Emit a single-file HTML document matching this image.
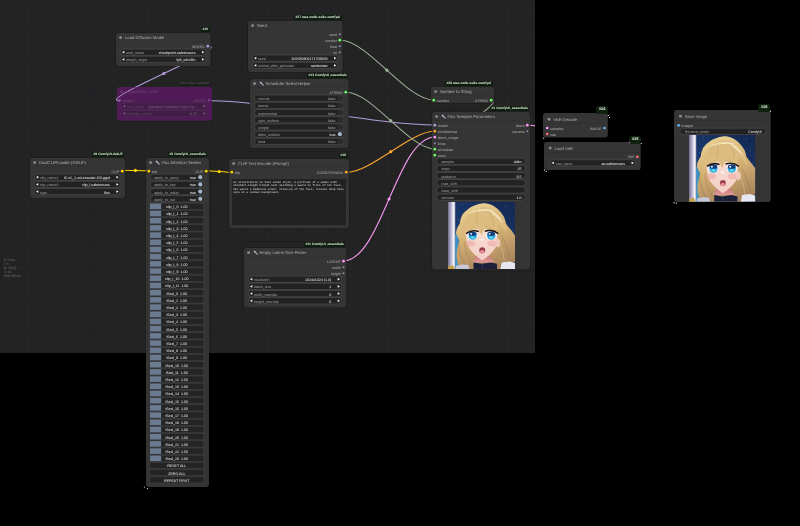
<!DOCTYPE html><html><head><meta charset="utf-8"><style>
*{margin:0;padding:0;box-sizing:border-box}
html,body{width:800px;height:526px;overflow:hidden;background:#000;font-family:"Liberation Sans",sans-serif;text-rendering:geometricPrecision}
#canvas{position:absolute;left:0;top:0;width:535px;height:353px;background-color:#242424;
background-image:
 linear-gradient(to right, rgba(0,0,0,0.08) 1px, transparent 1px),
 linear-gradient(to bottom, rgba(0,0,0,0.08) 1px, transparent 1px),
 linear-gradient(to right, rgba(0,0,0,0.04) 1px, transparent 1px),
 linear-gradient(to bottom, rgba(0,0,0,0.04) 1px, transparent 1px);
background-size:30px 30px,30px 30px,3px 3px,3px 3px;
background-position:1px 1px,1px 1px,1px 1px,1px 1px}
.axis{position:absolute;background:#1e242e}
svg.links{position:absolute;left:0;top:0;width:535px;height:353px;overflow:hidden}
.node{position:absolute;will-change:transform}
.ns{position:absolute;left:0;top:0;overflow:visible}
.wt{position:absolute;height:6px;line-height:8.0px;font-size:3.6px;white-space:nowrap}
.wl{color:#a0a0a0}
.wv{color:#f2f2f2}
.c{text-align:center}
.slabel{position:absolute;height:5px;line-height:6.2px;font-size:3.6px;color:#b0b0b0;white-space:nowrap}
.slabel.r{text-align:right}
.title{position:absolute;top:0;height:9px;line-height:9.2px;font-size:4.2px;color:#b0b0b0;white-space:nowrap}
.badge{position:absolute;padding:0 1.5px;background:#0c1f0c;color:#f0f0f0;font-size:3.35px;font-weight:bold;border-radius:1.8px;white-space:nowrap;will-change:transform}
.badge.tab{border-radius:2.2px;font-size:4px;background:#0e220e;z-index:2}
.badge.dim{background:rgba(20,20,20,0.25);color:#555}
.ta{position:absolute;background:#222;font-family:"Liberation Mono",monospace;font-size:2.75px;line-height:3.4px;color:#ddd;padding:0.8px 1.2px;word-break:normal}
.stats{position:absolute;left:4.2px;top:258.8px;font-size:3.15px;line-height:3.95px;color:#5c5c5c;white-space:nowrap;font-weight:bold;will-change:transform}
.img{position:absolute;overflow:hidden}
.tal{position:absolute;font-family:"Liberation Mono",monospace;font-size:2.75px;line-height:3.4px;color:#e0e0e0;white-space:nowrap}
</style></head><body><svg width="0" height="0" style="position:absolute"><defs>
<linearGradient id="bg" x1="0.8" y1="0" x2="0.1" y2="1"><stop offset="0" stop-color="#142a55"/><stop offset="0.55" stop-color="#1a3a70"/><stop offset="1" stop-color="#2f7fc0"/></linearGradient>
<linearGradient id="sw" x1="0" x2="1"><stop offset="0" stop-color="#6e6c88"/><stop offset="0.3" stop-color="#a6a4c0"/><stop offset="0.62" stop-color="#d8d8ea"/><stop offset="0.8" stop-color="#ffffff"/><stop offset="1" stop-color="#8a8aa0"/></linearGradient>
<linearGradient id="hr" x1="0.3" y1="0" x2="0.6" y2="1"><stop offset="0" stop-color="#ead094"/><stop offset="0.45" stop-color="#d6b476"/><stop offset="1" stop-color="#a8845c"/></linearGradient>
<linearGradient id="sk" x1="0" y1="0" x2="0" y2="1"><stop offset="0" stop-color="#f8dcd2"/><stop offset="1" stop-color="#f4cfc6"/></linearGradient>
<linearGradient id="nk" x1="0" y1="0" x2="0" y2="1"><stop offset="0" stop-color="#c87878"/><stop offset="1" stop-color="#e09a98"/></linearGradient>
<symbol id="girl" viewBox="0 0 100 100" preserveAspectRatio="none">
<rect width="100" height="100" fill="url(#bg)"/>
<path d="M10 48 L26 48 L28 96 L10 96Z" fill="#3a9fd6" opacity="0.85"/>
<g fill="#cfe0ff" opacity="0.75"><circle cx="86" cy="6" r="0.6"/><circle cx="92" cy="24" r="0.5"/><circle cx="22" cy="4" r="0.5"/><circle cx="95" cy="42" r="0.6"/><circle cx="90" cy="58" r="0.5"/><circle cx="16" cy="26" r="0.5"/><circle cx="74" cy="3" r="0.4"/></g>
<rect x="0" y="0" width="11" height="100" fill="url(#sw)"/>
<path d="M1 94 L4 97 L6 93 L9 97 L10 100 L0 100Z" fill="#c9a040"/>
<path d="M50.4 2.1 C38 4 28 10 21.7 18.8 C19 24 18 28 17.8 31.8 C15 36 12.5 41 11.9 45.5 C12 50 16 54 17 58 C14 66 12 76 13 84 C14 90 15 96 16 100 L84 100 C90 96 96 92 100 88 L100 50 C96 44 90 38 86.5 32.6 C85 26 84 22 81.5 19.4 C76 10 66 3 58 2.1 C55 1.8 52 1.8 50.4 2.1Z" fill="url(#hr)"/>
<path d="M41 80 L62 80 L69 90 L37 90Z" fill="url(#nk)"/>
<path d="M26 46 C27 56 29 64 31 68 C36 76 44 83 51 87.1 C58 83 66 76 71 68 C73 62 74 52 73.5 44 C62 38 38 38 26 46Z" fill="url(#sk)"/>
<path d="M20 48 C20 30 30 12 50 8 C70 6 84 20 88 46 C82 38 78 34 74 30 C75 38 72 44 68 46 C66 40 62 34 57 31 C55 39 52 45 50 50 C47 42 43 35 38 32 C36 39 31 44 26 47 Z" fill="#dcbc80"/>
<path d="M30 18 C40 10 58 8 70 14 C60 12 46 13 30 18Z" fill="#f6e8c0" opacity="0.8"/>
<path d="M56 10 C68 12 78 20 82 32 C74 24 66 17 56 10Z" fill="#f8ecc8" opacity="0.7"/>
<path d="M42 12 C44 20 44 26 42 32" stroke="#a07a48" stroke-width="0.6" fill="none" opacity="0.6"/>
<path d="M62 14 C66 22 68 28 68 36" stroke="#a07a48" stroke-width="0.6" fill="none" opacity="0.6"/>
<path d="M16 56 C15 72 20 86 28 98" stroke="#8a6848" stroke-width="1.2" fill="none" opacity="0.5"/>
<path d="M24 58 C25 72 30 86 38 96" stroke="#8a6848" stroke-width="0.9" fill="none" opacity="0.5"/>
<path d="M80 50 C86 62 92 76 92 92" stroke="#8a6848" stroke-width="1" fill="none" opacity="0.5"/>
<path d="M74 56 C80 66 84 80 84 94" stroke="#f0dca8" stroke-width="0.9" fill="none" opacity="0.6"/>
<ellipse cx="36.5" cy="49.5" rx="8.4" ry="7" fill="#f3eef6"/><ellipse cx="64.5" cy="49.5" rx="8.4" ry="7" fill="#f3eef6"/>
<ellipse cx="36.8" cy="50.2" rx="6.2" ry="6.2" fill="#23a3dc"/><ellipse cx="64.4" cy="50.2" rx="6.2" ry="6.2" fill="#23a3dc"/>
<ellipse cx="36.8" cy="47.4" rx="5.8" ry="3.2" fill="#123f7c"/><ellipse cx="64.4" cy="47.4" rx="5.8" ry="3.2" fill="#123f7c"/>
<ellipse cx="36.8" cy="53" rx="3.2" ry="2" fill="#6fe0f0" opacity="0.8"/><ellipse cx="64.4" cy="53" rx="3.2" ry="2" fill="#6fe0f0" opacity="0.8"/>
<circle cx="34.5" cy="47.5" r="1.4" fill="#fff"/><circle cx="62.1" cy="47.5" r="1.4" fill="#fff"/>
<path d="M27 47 Q35 40.5 46 44" stroke="#231712" stroke-width="2.4" fill="none"/><path d="M55 43.5 Q66 40 75 47" stroke="#231712" stroke-width="2.4" fill="none"/>
<ellipse cx="33" cy="62" rx="8" ry="4.5" fill="#ee9a9a" opacity="0.45"/><ellipse cx="66" cy="62" rx="7.5" ry="4.5" fill="#ee9a9a" opacity="0.45"/>
<ellipse cx="50.9" cy="56" rx="2.6" ry="1.4" fill="#fff6f2"/>
<ellipse cx="51" cy="71.9" rx="4.4" ry="4.6" fill="#9a3c4c"/><ellipse cx="51" cy="74" rx="3.2" ry="2.4" fill="#e88e98"/>
<path d="M72 54 C79 54 80 63 75 68 L71 66Z" fill="#f1c9bc"/>
<path d="M38 90 L50 92 L64 90 L73 92 L73 100 L38 100Z" fill="#1c2038"/>
<path d="M50.5 92 L51.5 92 L51.5 100 L50.5 100Z" fill="#3b4470"/>
<path d="M11 100 L12 95 L22 93 L30 94 L32 100Z" fill="#c8c8d8"/>
<path d="M80 90 L92 88.5 L100 91 L100 100 L78 100Z" fill="#e6e7f0"/>
</symbol></defs></svg>
<div id="canvas"></div>
<div class="axis" style="left:90.4px;top:90.4px;width:444.6px;height:0.6px"></div>
<div class="axis" style="left:90.4px;top:90.4px;width:0.6px;height:262.6px"></div>
<svg class="links" viewBox="0 0 535 353"><path d="M208 46.2 C233.95 46.2 93.75 100.8 119.7 100.8" fill="none" stroke="#b39ddb" stroke-width="1.05"/><circle cx="163.85" cy="73.5" r="1.6" fill="#b39ddb"/><path d="M211 100.8 C267.35 100.8 378.75 125 435.1 125" fill="none" stroke="#b39ddb" stroke-width="1.05"/><circle cx="323.05" cy="112.9" r="1.6" fill="#b39ddb"/><path d="M122.2 170.2 C128.8 170.2 142 170.7 148.6 170.7" fill="none" stroke="#ffd500" stroke-width="1.05"/><circle cx="135.4" cy="170.45" r="1.6" fill="#ffd500"/><path d="M206 170.7 C212.61 170.7 225.79 172.4 232.4 172.4" fill="none" stroke="#ffd500" stroke-width="1.05"/><circle cx="219.2" cy="171.55" r="1.6" fill="#ffd500"/><path d="M346.4 172.4 C370.87 172.4 410.63 131 435.1 131" fill="none" stroke="#ffa931" stroke-width="1.05"/><circle cx="390.75" cy="151.7" r="1.6" fill="#ffa931"/><path d="M343 261 C381.62 261 396.48 137 435.1 137" fill="none" stroke="#ff9cf9" stroke-width="1.05"/><circle cx="389.05" cy="199" r="1.6" fill="#ff9cf9"/><path d="M340.1 40.3 C367.83 40.3 405.87 100 433.6 100" fill="none" stroke="#9cb296" stroke-width="1.05"/><circle cx="386.85" cy="70.15" r="1.6" fill="#9cb296"/><path d="M346.2 92.2 C372.57 92.2 408.73 149 435.1 149" fill="none" stroke="#9cb296" stroke-width="1.05"/><circle cx="390.65" cy="120.6" r="1.6" fill="#9cb296"/><path d="M490.8 100 C510.37 100 415.53 155 435.1 155" fill="none" stroke="#9cb296" stroke-width="1.05"/><circle cx="462.95" cy="127.5" r="1.6" fill="#9cb296"/><path d="M527.6 125 C532.25 125 541.35 127.6 546 127.6" fill="none" stroke="#ff9cf9" stroke-width="1.05"/><circle cx="536.8" cy="126.3" r="1.6" fill="#ff9cf9"/></svg>
<div class="stats">T: 0.00s<br>I: 0<br>N: 10 [0]<br>V: 26<br>FPS:250.00</div>
<div class="badge" style="right:590.7px;top:27px;height:5px;line-height:5.3px">#10</div>
<div class="node" style="left:115.9px;top:33px;width:94.6px;height:33px">
<svg class="ns" width="94.6" height="33" viewBox="0 0 94.6 33"><rect x="-0.6" y="-0.6" width="95.8" height="34.2" rx="3" fill="#000" opacity="0.25"/><rect x="0" y="0" width="94.6" height="33" rx="2.4" fill="#353535"/><g><rect x="0.3" y="8.5" width="94" height="0.5" fill="#2e2e2e"/><circle cx="4.6" cy="4.6" r="1.45" fill="#8c8c8c"/><circle cx="91.8" cy="13.2" r="1.35" fill="#b39ddb"/><rect x="4.4" y="16.05" width="85.5" height="6.3" rx="3.15" fill="#222" stroke="#4c4c4c" stroke-width="0.7"/><path d="M8.3 17.8 L6 19.2 L8.3 20.6Z" fill="#f0f0f0"/><path d="M86 17.8 L88.3 19.2 L86 20.6Z" fill="#f0f0f0"/><rect x="4.4" y="23.25" width="85.5" height="6.3" rx="3.15" fill="#222" stroke="#4c4c4c" stroke-width="0.7"/><path d="M8.3 25 L6 26.4 L8.3 27.8Z" fill="#f0f0f0"/><path d="M86 25 L88.3 26.4 L86 27.8Z" fill="#f0f0f0"/></g></svg>
<div class="title" style="left:9px;top:0.1px">Load Diffusion Model</div><div class="slabel r" style="right:5.6px;top:10.7px">MODEL</div><div class="wt wl" style="left:10px;top:16.2px">unet_name</div><div class="wt wv" style="right:15.1px;top:16.2px">checkpoint.safetensors</div><div class="wt wl" style="left:10px;top:23.4px">weight_dtype</div><div class="wt wv" style="right:15.1px;top:23.4px">fp8_e4m3fn</div>

</div>
<div class="badge dim" style="right:589.3px;top:81.3px;height:5px;line-height:5.3px">#26 x-flux-comfyui</div>
<div class="node bypass" style="left:116.9px;top:87.3px;width:95px;height:33.7px">
<svg class="ns" width="95" height="33.7" viewBox="0 0 95 33.7"><rect x="0" y="0" width="95" height="33.7" rx="2.4" fill="#511b57"/><g opacity="0.3"><circle cx="4.6" cy="4.6" r="1.45" fill="#8c8c8c"/><circle cx="2.8" cy="13.2" r="1.35" fill="#b39ddb"/><circle cx="92.2" cy="13.2" r="1.35" fill="#b39ddb"/><rect x="4.4" y="16.05" width="85.9" height="6.3" rx="3.15" fill="#222" stroke="#4c4c4c" stroke-width="0.7"/><path d="M8.3 17.8 L6 19.2 L8.3 20.6Z" fill="#f0f0f0"/><path d="M86.4 17.8 L88.7 19.2 L86.4 20.6Z" fill="#f0f0f0"/><rect x="4.4" y="23.25" width="85.9" height="6.3" rx="3.15" fill="#222" stroke="#4c4c4c" stroke-width="0.7"/><path d="M8.3 25 L6 26.4 L8.3 27.8Z" fill="#f0f0f0"/><path d="M86.4 25 L88.7 26.4 L86.4 27.8Z" fill="#f0f0f0"/></g></svg>
<div style="opacity:0.3"><div class="title" style="left:11.2px;top:0.1px">Load Flux LoRA</div><div class="slabel" style="left:5.8px;top:10.7px">model</div><div class="slabel r" style="right:5.6px;top:10.7px">MODEL</div><div class="wt wl" style="left:10px;top:16.2px">lora_name</div><div class="wt wv" style="right:15.1px;top:16.2px">Sylvatica&#39;s Matthew Style-Sp...</div><div class="wt wl" style="left:10px;top:23.4px">strength_model</div><div class="wt wv" style="right:15.1px;top:23.4px">0.75</div></div>
</div>
<svg class="links" viewBox="0 0 535 353" style="z-index:1"><defs><clipPath id="lc"><rect x="116.9" y="87.6" width="95" height="33.4" rx="2.4"/></clipPath></defs><path d="M208 46.2 C233.95 46.2 93.75 100.8 119.7 100.8" fill="none" stroke="#b39ddb" stroke-width="0.95" clip-path="url(#lc)"/></svg>
<div class="badge" style="right:458.3px;top:15.1px;height:5px;line-height:5.3px">#27 was-node-suite-comfyui</div>
<div class="node" style="left:248.3px;top:21.1px;width:94.6px;height:51px">
<svg class="ns" width="94.6" height="51" viewBox="0 0 94.6 51"><rect x="-0.6" y="-0.6" width="95.8" height="52.2" rx="3" fill="#000" opacity="0.25"/><rect x="0" y="0" width="94.6" height="51" rx="2.4" fill="#353535"/><g><rect x="0.3" y="8.5" width="94" height="0.5" fill="#2e2e2e"/><circle cx="4.6" cy="4.6" r="1.45" fill="#8c8c8c"/><circle cx="91.8" cy="13.2" r="1.05" fill="#9a9ac8" opacity="0.8"/><circle cx="91.8" cy="19.2" r="1.35" fill="#6f6"/><circle cx="91.8" cy="25.2" r="1.05" fill="#9a9ac8" opacity="0.8"/><circle cx="91.8" cy="31.2" r="1.05" fill="#9a9ac8" opacity="0.8"/><rect x="4.4" y="34.05" width="85.5" height="6.3" rx="3.15" fill="#222" stroke="#4c4c4c" stroke-width="0.7"/><path d="M8.3 35.8 L6 37.2 L8.3 38.6Z" fill="#f0f0f0"/><path d="M86 35.8 L88.3 37.2 L86 38.6Z" fill="#f0f0f0"/><rect x="4.4" y="41.25" width="85.5" height="6.3" rx="3.15" fill="#222" stroke="#4c4c4c" stroke-width="0.7"/><path d="M8.3 43 L6 44.4 L8.3 45.8Z" fill="#f0f0f0"/><path d="M86 43 L88.3 44.4 L86 45.8Z" fill="#f0f0f0"/></g></svg>
<div class="title" style="left:9px;top:0.1px">Seed</div><div class="slabel r" style="right:5.6px;top:10.7px">seed</div><div class="slabel r" style="right:5.6px;top:16.7px">number</div><div class="slabel r" style="right:5.6px;top:22.7px">float</div><div class="slabel r" style="right:5.6px;top:28.7px">int</div><div class="wt wl" style="left:10px;top:34.2px">seed</div><div class="wt wv" style="right:15.1px;top:34.2px">302580806171709668</div><div class="wt wl" style="left:10px;top:41.4px">control_after_generate</div><div class="wt wv" style="right:15.1px;top:41.4px">randomize</div>

</div>
<div class="badge" style="right:452.2px;top:73px;height:5px;line-height:5.3px">#13 ComfyUI_essentials</div>
<div class="node" style="left:250.4px;top:79px;width:98.6px;height:69px">
<svg class="ns" width="98.6" height="69" viewBox="0 0 98.6 69"><rect x="-0.6" y="-0.6" width="99.8" height="70.2" rx="3" fill="#000" opacity="0.25"/><rect x="0" y="0" width="98.6" height="69" rx="2.4" fill="#353535"/><g><rect x="0.3" y="8.5" width="98" height="0.5" fill="#2e2e2e"/><circle cx="4.6" cy="4.6" r="1.45" fill="#8c8c8c"/><g transform="translate(9.4,2.3) scale(0.46)"><path d="M3.2 3.2 L8.4 8.4" stroke="#b8b2cc" stroke-width="2.4" stroke-linecap="round"/><path d="M0.2 2.6 L2.6 0.2 L5.2 2.6 L2.6 5.2Z" fill="#b8b2cc"/></g><circle cx="95.8" cy="13.2" r="1.35" fill="#6f6"/><rect x="4.4" y="16.05" width="89.5" height="6.3" rx="3.15" fill="#222" stroke="#4c4c4c" stroke-width="0.7"/><circle cx="89.9" cy="19.2" r="2.0" fill="#262626" stroke="#4a4a4a" stroke-width="0.45"/><rect x="4.4" y="23.25" width="89.5" height="6.3" rx="3.15" fill="#222" stroke="#4c4c4c" stroke-width="0.7"/><circle cx="89.9" cy="26.4" r="2.0" fill="#262626" stroke="#4a4a4a" stroke-width="0.45"/><rect x="4.4" y="30.45" width="89.5" height="6.3" rx="3.15" fill="#222" stroke="#4c4c4c" stroke-width="0.7"/><circle cx="89.9" cy="33.6" r="2.0" fill="#262626" stroke="#4a4a4a" stroke-width="0.45"/><rect x="4.4" y="37.65" width="89.5" height="6.3" rx="3.15" fill="#222" stroke="#4c4c4c" stroke-width="0.7"/><circle cx="89.9" cy="40.8" r="2.0" fill="#262626" stroke="#4a4a4a" stroke-width="0.45"/><rect x="4.4" y="44.85" width="89.5" height="6.3" rx="3.15" fill="#222" stroke="#4c4c4c" stroke-width="0.7"/><circle cx="89.9" cy="48" r="2.0" fill="#262626" stroke="#4a4a4a" stroke-width="0.45"/><rect x="4.4" y="52.05" width="89.5" height="6.3" rx="3.15" fill="#222" stroke="#4c4c4c" stroke-width="0.7"/><circle cx="89.9" cy="55.2" r="2.1" fill="#a4b6cc"/><rect x="4.4" y="59.25" width="89.5" height="6.3" rx="3.15" fill="#222" stroke="#4c4c4c" stroke-width="0.7"/><circle cx="89.9" cy="62.4" r="2.0" fill="#262626" stroke="#4a4a4a" stroke-width="0.45"/></g></svg>
<div class="title" style="left:15.5px;top:0.1px">Scheduler Select Helper</div><div class="slabel r" style="right:5.6px;top:10.7px">STRING</div><div class="wt wl" style="left:8.3px;top:16.2px">normal</div><div class="wt wl" style="right:13px;top:16.2px">false</div><div class="wt wl" style="left:8.3px;top:23.4px">karras</div><div class="wt wl" style="right:13px;top:23.4px">false</div><div class="wt wl" style="left:8.3px;top:30.6px">exponential</div><div class="wt wl" style="right:13px;top:30.6px">false</div><div class="wt wl" style="left:8.3px;top:37.8px">sgm_uniform</div><div class="wt wl" style="right:13px;top:37.8px">false</div><div class="wt wl" style="left:8.3px;top:45px">simple</div><div class="wt wl" style="right:13px;top:45px">false</div><div class="wt wl" style="left:8.3px;top:52.2px">ddim_uniform</div><div class="wt wv" style="right:13px;top:52.2px">true</div><div class="wt wl" style="left:8.3px;top:59.4px">beta</div><div class="wt wl" style="right:13px;top:59.4px">false</div>

</div>
<div class="badge" style="right:452.2px;top:153px;height:5px;line-height:5.3px">#18</div>
<div class="node" style="left:229px;top:159px;width:120px;height:69.2px">
<svg class="ns" width="120" height="69.2" viewBox="0 0 120 69.2"><rect x="-0.6" y="-0.6" width="121.2" height="70.4" rx="3" fill="#000" opacity="0.25"/><rect x="0" y="0" width="120" height="69.2" rx="2.4" fill="#353535"/><g><rect x="0.3" y="8.5" width="119.4" height="0.5" fill="#2e2e2e"/><circle cx="4.6" cy="4.6" r="1.45" fill="#8c8c8c"/><circle cx="2.8" cy="13.2" r="1.35" fill="#ffd500"/><circle cx="117.2" cy="13.2" r="1.35" fill="#ffa931"/></g></svg>
<div class="title" style="left:9px;top:0.1px">CLIP Text Encode (Prompt)</div><div class="slabel" style="left:5.8px;top:10.7px">clip</div><div class="slabel r" style="right:5.6px;top:10.7px">CONDITIONING</div>
<div class="ta" style="left:3px;right:3px;top:20px;bottom:3.1px"></div><div class="tal" style="left:4.2px;top:21.7px">An illustration in 2024 anime style. A portrait of a woman with</div><div class="tal" style="left:4.2px;top:25.2px">shoulder-length blonde hair wielding a sword in front of her face.</div><div class="tal" style="left:4.2px;top:28.8px">She wears a medieval armor. Close-up of the face, reveals deep blue</div><div class="tal" style="left:4.2px;top:32.1px">eyes on a cosmos background.</div>
</div>
<div class="badge" style="right:455.3px;top:242.1px;height:5px;line-height:5.3px">#11 ComfyUI_essentials</div>
<div class="node" style="left:243.6px;top:248.1px;width:102.3px;height:59.5px">
<svg class="ns" width="102.3" height="59.5" viewBox="0 0 102.3 59.5"><rect x="-0.6" y="-0.6" width="103.5" height="60.7" rx="3" fill="#000" opacity="0.25"/><rect x="0" y="0" width="102.3" height="59.5" rx="2.4" fill="#353535"/><g><rect x="0.3" y="8.5" width="101.7" height="0.5" fill="#2e2e2e"/><circle cx="4.6" cy="4.6" r="1.45" fill="#8c8c8c"/><g transform="translate(9.4,2.3) scale(0.46)"><path d="M3.2 3.2 L8.4 8.4" stroke="#b8b2cc" stroke-width="2.4" stroke-linecap="round"/><path d="M0.2 2.6 L2.6 0.2 L5.2 2.6 L2.6 5.2Z" fill="#b8b2cc"/></g><circle cx="99.5" cy="13.2" r="1.35" fill="#ff9cf9"/><circle cx="99.5" cy="19.2" r="1.05" fill="#9a9ac8" opacity="0.8"/><circle cx="99.5" cy="25.2" r="1.05" fill="#9a9ac8" opacity="0.8"/><rect x="4.4" y="28.05" width="93.2" height="6.3" rx="3.15" fill="#222" stroke="#4c4c4c" stroke-width="0.7"/><path d="M8.3 29.8 L6 31.2 L8.3 32.6Z" fill="#f0f0f0"/><path d="M93.7 29.8 L96 31.2 L93.7 32.6Z" fill="#f0f0f0"/><rect x="4.4" y="35.25" width="93.2" height="6.3" rx="3.15" fill="#222" stroke="#4c4c4c" stroke-width="0.7"/><path d="M8.3 37 L6 38.4 L8.3 39.8Z" fill="#f0f0f0"/><path d="M93.7 37 L96 38.4 L93.7 39.8Z" fill="#f0f0f0"/><rect x="4.4" y="42.45" width="93.2" height="6.3" rx="3.15" fill="#222" stroke="#4c4c4c" stroke-width="0.7"/><path d="M8.3 44.2 L6 45.6 L8.3 47Z" fill="#f0f0f0"/><path d="M93.7 44.2 L96 45.6 L93.7 47Z" fill="#f0f0f0"/><rect x="4.4" y="49.65" width="93.2" height="6.3" rx="3.15" fill="#222" stroke="#4c4c4c" stroke-width="0.7"/><path d="M8.3 51.4 L6 52.8 L8.3 54.2Z" fill="#f0f0f0"/><path d="M93.7 51.4 L96 52.8 L93.7 54.2Z" fill="#f0f0f0"/></g></svg>
<div class="title" style="left:15.5px;top:0.1px">Empty Latent Size Picker</div><div class="slabel r" style="right:5.6px;top:10.7px">LATENT</div><div class="slabel r" style="right:5.6px;top:16.7px">width</div><div class="slabel r" style="right:5.6px;top:22.7px">height</div><div class="wt wl" style="left:10px;top:28.2px">resolution</div><div class="wt wv" style="right:15.1px;top:28.2px">1024x1024 (1.0)</div><div class="wt wl" style="left:10px;top:35.4px">batch_size</div><div class="wt wv" style="right:15.1px;top:35.4px">1</div><div class="wt wl" style="left:10px;top:42.6px">width_override</div><div class="wt wv" style="right:15.1px;top:42.6px">0</div><div class="wt wl" style="left:10px;top:49.8px">height_override</div><div class="wt wv" style="right:15.1px;top:49.8px">0</div>

</div>
<div class="badge" style="right:676.2px;top:152px;height:5px;line-height:5.3px">#9 ComfyUI-GGUF</div>
<div class="node" style="left:30px;top:158px;width:95px;height:40px">
<svg class="ns" width="95" height="40" viewBox="0 0 95 40"><rect x="-0.6" y="-0.6" width="96.2" height="41.2" rx="3" fill="#000" opacity="0.25"/><rect x="0" y="0" width="95" height="40" rx="2.4" fill="#353535"/><g><rect x="0.3" y="8.5" width="94.4" height="0.5" fill="#2e2e2e"/><circle cx="4.6" cy="4.6" r="1.45" fill="#8c8c8c"/><circle cx="92.2" cy="13.2" r="1.35" fill="#ffd500"/><rect x="4.4" y="16.05" width="85.9" height="6.3" rx="3.15" fill="#222" stroke="#4c4c4c" stroke-width="0.7"/><path d="M8.3 17.8 L6 19.2 L8.3 20.6Z" fill="#f0f0f0"/><path d="M86.4 17.8 L88.7 19.2 L86.4 20.6Z" fill="#f0f0f0"/><rect x="4.4" y="23.25" width="85.9" height="6.3" rx="3.15" fill="#222" stroke="#4c4c4c" stroke-width="0.7"/><path d="M8.3 25 L6 26.4 L8.3 27.8Z" fill="#f0f0f0"/><path d="M86.4 25 L88.7 26.4 L86.4 27.8Z" fill="#f0f0f0"/><rect x="4.4" y="30.45" width="85.9" height="6.3" rx="3.15" fill="#222" stroke="#4c4c4c" stroke-width="0.7"/><path d="M8.3 32.2 L6 33.6 L8.3 35Z" fill="#f0f0f0"/><path d="M86.4 32.2 L88.7 33.6 L86.4 35Z" fill="#f0f0f0"/></g></svg>
<div class="title" style="left:9px;top:0.1px">DualCLIPLoader (GGUF)</div><div class="slabel r" style="right:5.6px;top:10.7px">CLIP</div><div class="wt wl" style="left:10px;top:16.2px">clip_name1</div><div class="wt wv" style="right:15.1px;top:16.2px">t5-v1_1-xxl-encoder-f16.gguf</div><div class="wt wl" style="left:10px;top:23.4px">clip_name2</div><div class="wt wv" style="right:15.1px;top:23.4px">clip_l.safetensors</div><div class="wt wl" style="left:10px;top:30.6px">type</div><div class="wt wv" style="right:15.1px;top:30.6px">flux</div>

</div>
<div class="badge" style="right:592.4px;top:151.5px;height:5px;line-height:5.3px">#5 ComfyUI_essentials</div>
<div class="node" style="left:145.8px;top:157.5px;width:63px;height:328.9px">
<svg class="ns" width="63" height="328.9" viewBox="0 0 63 328.9"><rect x="-0.6" y="-0.6" width="64.2" height="330.1" rx="3" fill="#000" opacity="0.25"/><rect x="0" y="0" width="63" height="328.9" rx="2.4" fill="#353535"/><g><rect x="0.3" y="8.5" width="62.4" height="0.5" fill="#2e2e2e"/><circle cx="4.6" cy="4.6" r="1.45" fill="#8c8c8c"/><g transform="translate(9.4,2.3) scale(0.46)"><path d="M3.2 3.2 L8.4 8.4" stroke="#b8b2cc" stroke-width="2.4" stroke-linecap="round"/><path d="M0.2 2.6 L2.6 0.2 L5.2 2.6 L2.6 5.2Z" fill="#b8b2cc"/></g><circle cx="2.8" cy="13.2" r="1.35" fill="#ffd500"/><circle cx="60.2" cy="13.2" r="1.35" fill="#ffd500"/><rect x="4.4" y="16.05" width="53.9" height="6.3" rx="3.15" fill="#222" stroke="#4c4c4c" stroke-width="0.7"/><circle cx="54.3" cy="19.2" r="2.1" fill="#a4b6cc"/><rect x="4.4" y="23.25" width="53.9" height="6.3" rx="3.15" fill="#222" stroke="#4c4c4c" stroke-width="0.7"/><circle cx="54.3" cy="26.4" r="2.1" fill="#a4b6cc"/><rect x="4.4" y="30.45" width="53.9" height="6.3" rx="3.15" fill="#222" stroke="#4c4c4c" stroke-width="0.7"/><circle cx="54.3" cy="33.6" r="2.1" fill="#a4b6cc"/><rect x="4.4" y="37.65" width="53.9" height="6.3" rx="3.15" fill="#222" stroke="#4c4c4c" stroke-width="0.7"/><circle cx="54.3" cy="40.8" r="2.1" fill="#a4b6cc"/><rect x="3.8" y="45.25" width="54" height="6.1" fill="#242424" stroke="#404040" stroke-width="0.55"/><rect x="4.05" y="45.5" width="11.1" height="5.6" fill="#6a7b92"/><rect x="3.8" y="52.45" width="54" height="6.1" fill="#242424" stroke="#404040" stroke-width="0.55"/><rect x="4.05" y="52.7" width="11.1" height="5.6" fill="#6a7b92"/><rect x="3.8" y="59.65" width="54" height="6.1" fill="#242424" stroke="#404040" stroke-width="0.55"/><rect x="4.05" y="59.9" width="11.1" height="5.6" fill="#6a7b92"/><rect x="3.8" y="66.85" width="54" height="6.1" fill="#242424" stroke="#404040" stroke-width="0.55"/><rect x="4.05" y="67.1" width="11.1" height="5.6" fill="#6a7b92"/><rect x="3.8" y="74.05" width="54" height="6.1" fill="#242424" stroke="#404040" stroke-width="0.55"/><rect x="4.05" y="74.3" width="11.1" height="5.6" fill="#6a7b92"/><rect x="3.8" y="81.25" width="54" height="6.1" fill="#242424" stroke="#404040" stroke-width="0.55"/><rect x="4.05" y="81.5" width="11.1" height="5.6" fill="#6a7b92"/><rect x="3.8" y="88.45" width="54" height="6.1" fill="#242424" stroke="#404040" stroke-width="0.55"/><rect x="4.05" y="88.7" width="11.1" height="5.6" fill="#6a7b92"/><rect x="3.8" y="95.65" width="54" height="6.1" fill="#242424" stroke="#404040" stroke-width="0.55"/><rect x="4.05" y="95.9" width="11.1" height="5.6" fill="#6a7b92"/><rect x="3.8" y="102.85" width="54" height="6.1" fill="#242424" stroke="#404040" stroke-width="0.55"/><rect x="4.05" y="103.1" width="11.1" height="5.6" fill="#6a7b92"/><rect x="3.8" y="110.05" width="54" height="6.1" fill="#242424" stroke="#404040" stroke-width="0.55"/><rect x="4.05" y="110.3" width="11.1" height="5.6" fill="#6a7b92"/><rect x="3.8" y="117.25" width="54" height="6.1" fill="#242424" stroke="#404040" stroke-width="0.55"/><rect x="4.05" y="117.5" width="11.1" height="5.6" fill="#6a7b92"/><rect x="3.8" y="124.45" width="54" height="6.1" fill="#242424" stroke="#404040" stroke-width="0.55"/><rect x="4.05" y="124.7" width="11.1" height="5.6" fill="#6a7b92"/><rect x="3.8" y="131.65" width="54" height="6.1" fill="#242424" stroke="#404040" stroke-width="0.55"/><rect x="4.05" y="131.9" width="11.1" height="5.6" fill="#6a7b92"/><rect x="3.8" y="138.85" width="54" height="6.1" fill="#242424" stroke="#404040" stroke-width="0.55"/><rect x="4.05" y="139.1" width="11.1" height="5.6" fill="#6a7b92"/><rect x="3.8" y="146.05" width="54" height="6.1" fill="#242424" stroke="#404040" stroke-width="0.55"/><rect x="4.05" y="146.3" width="11.1" height="5.6" fill="#6a7b92"/><rect x="3.8" y="153.25" width="54" height="6.1" fill="#242424" stroke="#404040" stroke-width="0.55"/><rect x="4.05" y="153.5" width="11.1" height="5.6" fill="#6a7b92"/><rect x="3.8" y="160.45" width="54" height="6.1" fill="#242424" stroke="#404040" stroke-width="0.55"/><rect x="4.05" y="160.7" width="11.1" height="5.6" fill="#6a7b92"/><rect x="3.8" y="167.65" width="54" height="6.1" fill="#242424" stroke="#404040" stroke-width="0.55"/><rect x="4.05" y="167.9" width="11.1" height="5.6" fill="#6a7b92"/><rect x="3.8" y="174.85" width="54" height="6.1" fill="#242424" stroke="#404040" stroke-width="0.55"/><rect x="4.05" y="175.1" width="11.1" height="5.6" fill="#6a7b92"/><rect x="3.8" y="182.05" width="54" height="6.1" fill="#242424" stroke="#404040" stroke-width="0.55"/><rect x="4.05" y="182.3" width="11.1" height="5.6" fill="#6a7b92"/><rect x="3.8" y="189.25" width="54" height="6.1" fill="#242424" stroke="#404040" stroke-width="0.55"/><rect x="4.05" y="189.5" width="11.1" height="5.6" fill="#6a7b92"/><rect x="3.8" y="196.45" width="54" height="6.1" fill="#242424" stroke="#404040" stroke-width="0.55"/><rect x="4.05" y="196.7" width="11.1" height="5.6" fill="#6a7b92"/><rect x="3.8" y="203.65" width="54" height="6.1" fill="#242424" stroke="#404040" stroke-width="0.55"/><rect x="4.05" y="203.9" width="11.1" height="5.6" fill="#6a7b92"/><rect x="3.8" y="210.85" width="54" height="6.1" fill="#242424" stroke="#404040" stroke-width="0.55"/><rect x="4.05" y="211.1" width="11.1" height="5.6" fill="#6a7b92"/><rect x="3.8" y="218.05" width="54" height="6.1" fill="#242424" stroke="#404040" stroke-width="0.55"/><rect x="4.05" y="218.3" width="11.1" height="5.6" fill="#6a7b92"/><rect x="3.8" y="225.25" width="54" height="6.1" fill="#242424" stroke="#404040" stroke-width="0.55"/><rect x="4.05" y="225.5" width="11.1" height="5.6" fill="#6a7b92"/><rect x="3.8" y="232.45" width="54" height="6.1" fill="#242424" stroke="#404040" stroke-width="0.55"/><rect x="4.05" y="232.7" width="11.1" height="5.6" fill="#6a7b92"/><rect x="3.8" y="239.65" width="54" height="6.1" fill="#242424" stroke="#404040" stroke-width="0.55"/><rect x="4.05" y="239.9" width="11.1" height="5.6" fill="#6a7b92"/><rect x="3.8" y="246.85" width="54" height="6.1" fill="#242424" stroke="#404040" stroke-width="0.55"/><rect x="4.05" y="247.1" width="11.1" height="5.6" fill="#6a7b92"/><rect x="3.8" y="254.05" width="54" height="6.1" fill="#242424" stroke="#404040" stroke-width="0.55"/><rect x="4.05" y="254.3" width="11.1" height="5.6" fill="#6a7b92"/><rect x="3.8" y="261.25" width="54" height="6.1" fill="#242424" stroke="#404040" stroke-width="0.55"/><rect x="4.05" y="261.5" width="11.1" height="5.6" fill="#6a7b92"/><rect x="3.8" y="268.45" width="54" height="6.1" fill="#242424" stroke="#404040" stroke-width="0.55"/><rect x="4.05" y="268.7" width="11.1" height="5.6" fill="#6a7b92"/><rect x="3.8" y="275.65" width="54" height="6.1" fill="#242424" stroke="#404040" stroke-width="0.55"/><rect x="4.05" y="275.9" width="11.1" height="5.6" fill="#6a7b92"/><rect x="3.8" y="282.85" width="54" height="6.1" fill="#242424" stroke="#404040" stroke-width="0.55"/><rect x="4.05" y="283.1" width="11.1" height="5.6" fill="#6a7b92"/><rect x="3.8" y="290.05" width="54" height="6.1" fill="#242424" stroke="#404040" stroke-width="0.55"/><rect x="4.05" y="290.3" width="11.1" height="5.6" fill="#6a7b92"/><rect x="3.8" y="297.25" width="54" height="6.1" fill="#242424" stroke="#404040" stroke-width="0.55"/><rect x="4.05" y="297.5" width="11.1" height="5.6" fill="#6a7b92"/><rect x="3.8" y="304.45" width="54" height="6.1" fill="#242424" stroke="#404040" stroke-width="0.55"/><rect x="3.8" y="311.65" width="54" height="6.1" fill="#242424" stroke="#404040" stroke-width="0.55"/><rect x="3.8" y="318.85" width="54" height="6.1" fill="#242424" stroke="#404040" stroke-width="0.55"/></g></svg>
<div class="title" style="left:15.5px;top:0.1px">Flux Attention Seeker</div><div class="slabel" style="left:5.8px;top:10.7px">clip</div><div class="slabel r" style="right:5.6px;top:10.7px">CLIP</div><div class="wt wl" style="left:8.3px;top:16.2px">apply_to_query</div><div class="wt wv" style="right:13px;top:16.2px">true</div><div class="wt wl" style="left:8.3px;top:23.4px">apply_to_key</div><div class="wt wv" style="right:13px;top:23.4px">true</div><div class="wt wl" style="left:8.3px;top:30.6px">apply_to_value</div><div class="wt wv" style="right:13px;top:30.6px">true</div><div class="wt wl" style="left:8.3px;top:37.8px">apply_to_out</div><div class="wt wv" style="right:13px;top:37.8px">true</div><div class="wt wv c" style="left:3.8px;width:54px;top:45.2px">clip_l_0&nbsp; 1.00</div><div class="wt wv c" style="left:3.8px;width:54px;top:52.4px">clip_l_1&nbsp; 1.00</div><div class="wt wv c" style="left:3.8px;width:54px;top:59.6px">clip_l_2&nbsp; 1.00</div><div class="wt wv c" style="left:3.8px;width:54px;top:66.8px">clip_l_3&nbsp; 1.00</div><div class="wt wv c" style="left:3.8px;width:54px;top:74px">clip_l_4&nbsp; 1.00</div><div class="wt wv c" style="left:3.8px;width:54px;top:81.2px">clip_l_5&nbsp; 1.00</div><div class="wt wv c" style="left:3.8px;width:54px;top:88.4px">clip_l_6&nbsp; 1.00</div><div class="wt wv c" style="left:3.8px;width:54px;top:95.6px">clip_l_7&nbsp; 1.00</div><div class="wt wv c" style="left:3.8px;width:54px;top:102.8px">clip_l_8&nbsp; 1.00</div><div class="wt wv c" style="left:3.8px;width:54px;top:110px">clip_l_9&nbsp; 1.00</div><div class="wt wv c" style="left:3.8px;width:54px;top:117.2px">clip_l_10&nbsp; 1.00</div><div class="wt wv c" style="left:3.8px;width:54px;top:124.4px">clip_l_11&nbsp; 1.00</div><div class="wt wv c" style="left:3.8px;width:54px;top:131.6px">t5xxl_0&nbsp; 1.00</div><div class="wt wv c" style="left:3.8px;width:54px;top:138.8px">t5xxl_1&nbsp; 1.00</div><div class="wt wv c" style="left:3.8px;width:54px;top:146px">t5xxl_2&nbsp; 1.00</div><div class="wt wv c" style="left:3.8px;width:54px;top:153.2px">t5xxl_3&nbsp; 1.00</div><div class="wt wv c" style="left:3.8px;width:54px;top:160.4px">t5xxl_4&nbsp; 1.00</div><div class="wt wv c" style="left:3.8px;width:54px;top:167.6px">t5xxl_5&nbsp; 1.00</div><div class="wt wv c" style="left:3.8px;width:54px;top:174.8px">t5xxl_6&nbsp; 1.00</div><div class="wt wv c" style="left:3.8px;width:54px;top:182px">t5xxl_7&nbsp; 1.00</div><div class="wt wv c" style="left:3.8px;width:54px;top:189.2px">t5xxl_8&nbsp; 1.00</div><div class="wt wv c" style="left:3.8px;width:54px;top:196.4px">t5xxl_9&nbsp; 1.00</div><div class="wt wv c" style="left:3.8px;width:54px;top:203.6px">t5xxl_10&nbsp; 1.00</div><div class="wt wv c" style="left:3.8px;width:54px;top:210.8px">t5xxl_11&nbsp; 1.00</div><div class="wt wv c" style="left:3.8px;width:54px;top:218px">t5xxl_12&nbsp; 1.00</div><div class="wt wv c" style="left:3.8px;width:54px;top:225.2px">t5xxl_13&nbsp; 1.00</div><div class="wt wv c" style="left:3.8px;width:54px;top:232.4px">t5xxl_14&nbsp; 1.00</div><div class="wt wv c" style="left:3.8px;width:54px;top:239.6px">t5xxl_15&nbsp; 1.00</div><div class="wt wv c" style="left:3.8px;width:54px;top:246.8px">t5xxl_16&nbsp; 1.00</div><div class="wt wv c" style="left:3.8px;width:54px;top:254px">t5xxl_17&nbsp; 1.00</div><div class="wt wv c" style="left:3.8px;width:54px;top:261.2px">t5xxl_18&nbsp; 1.00</div><div class="wt wv c" style="left:3.8px;width:54px;top:268.4px">t5xxl_19&nbsp; 1.00</div><div class="wt wv c" style="left:3.8px;width:54px;top:275.6px">t5xxl_20&nbsp; 1.00</div><div class="wt wv c" style="left:3.8px;width:54px;top:282.8px">t5xxl_21&nbsp; 1.00</div><div class="wt wv c" style="left:3.8px;width:54px;top:290px">t5xxl_22&nbsp; 1.00</div><div class="wt wv c" style="left:3.8px;width:54px;top:297.2px">t5xxl_23&nbsp; 1.00</div><div class="wt wv c" style="left:3.8px;width:54px;top:304.4px">RESET ALL</div><div class="wt wv c" style="left:3.8px;width:54px;top:311.6px">ZERO ALL</div><div class="wt wv c" style="left:3.8px;width:54px;top:318.8px">REPEAT FIRST</div>

</div>
<div class="badge" style="right:307.6px;top:81.3px;height:5px;line-height:5.3px">#28 was-node-suite-comfyui</div>
<div class="node" style="left:430.6px;top:87.3px;width:63px;height:16px">
<svg class="ns" width="63" height="16" viewBox="0 0 63 16"><rect x="-0.6" y="-0.6" width="64.2" height="17.2" rx="3" fill="#000" opacity="0.25"/><rect x="0" y="0" width="63" height="16" rx="2.4" fill="#353535"/><g><rect x="0.3" y="8.5" width="62.4" height="0.5" fill="#2e2e2e"/><circle cx="4.6" cy="4.6" r="1.45" fill="#8c8c8c"/><circle cx="2.8" cy="13.2" r="1.35" fill="#6f6"/><circle cx="60.2" cy="13.2" r="1.35" fill="#6f6"/></g></svg>
<div class="title" style="left:9px;top:0.1px">Number to String</div><div class="slabel" style="left:5.8px;top:10.7px">number</div><div class="slabel r" style="right:5.6px;top:10.7px">STRING</div>

</div>
<div class="badge" style="right:270.8px;top:105.8px;height:5px;line-height:5.3px">#1 ComfyUI_essentials</div>
<div class="node" style="left:432.3px;top:111.8px;width:98.1px;height:157.4px">
<svg class="ns" width="98.1" height="157.4" viewBox="0 0 98.1 157.4"><rect x="-0.6" y="-0.6" width="99.3" height="158.6" rx="3" fill="#000" opacity="0.25"/><rect x="0" y="0" width="98.1" height="157.4" rx="2.4" fill="#353535"/><g><rect x="0.3" y="8.5" width="97.5" height="0.5" fill="#2e2e2e"/><circle cx="4.6" cy="4.6" r="1.45" fill="#8c8c8c"/><g transform="translate(9.4,2.3) scale(0.46)"><path d="M3.2 3.2 L8.4 8.4" stroke="#b8b2cc" stroke-width="2.4" stroke-linecap="round"/><path d="M0.2 2.6 L2.6 0.2 L5.2 2.6 L2.6 5.2Z" fill="#b8b2cc"/></g><circle cx="2.8" cy="13.2" r="1.35" fill="#b39ddb"/><circle cx="2.8" cy="19.2" r="1.35" fill="#ffa931"/><circle cx="2.8" cy="25.2" r="1.35" fill="#ff9cf9"/><circle cx="2.8" cy="31.2" r="1.05" fill="#9a9ac8" opacity="0.8"/><circle cx="2.8" cy="37.2" r="1.35" fill="#6f6"/><circle cx="2.8" cy="43.2" r="1.35" fill="#6f6"/><circle cx="95.3" cy="13.2" r="1.35" fill="#ff9cf9"/><circle cx="95.3" cy="19.2" r="1.05" fill="#9a9ac8" opacity="0.8"/><rect x="4.4" y="46.05" width="89" height="6.3" rx="3.15" fill="#222" stroke="#4c4c4c" stroke-width="0.7"/><rect x="4.4" y="53.25" width="89" height="6.3" rx="3.15" fill="#222" stroke="#4c4c4c" stroke-width="0.7"/><rect x="4.4" y="60.45" width="89" height="6.3" rx="3.15" fill="#222" stroke="#4c4c4c" stroke-width="0.7"/><rect x="4.4" y="67.65" width="89" height="6.3" rx="3.15" fill="#222" stroke="#4c4c4c" stroke-width="0.7"/><rect x="4.4" y="74.85" width="89" height="6.3" rx="3.15" fill="#222" stroke="#4c4c4c" stroke-width="0.7"/><rect x="4.4" y="82.05" width="89" height="6.3" rx="3.15" fill="#222" stroke="#4c4c4c" stroke-width="0.7"/></g></svg>
<div class="title" style="left:15.5px;top:0.1px">Flux Sampler Parameters</div><div class="slabel" style="left:5.8px;top:10.7px">model</div><div class="slabel" style="left:5.8px;top:16.7px">conditioning</div><div class="slabel" style="left:5.8px;top:22.7px">latent_image</div><div class="slabel" style="left:5.8px;top:28.7px">loras</div><div class="slabel" style="left:5.8px;top:34.7px">scheduler</div><div class="slabel" style="left:5.8px;top:40.7px">seed</div><div class="slabel r" style="right:5.6px;top:10.7px">latent</div><div class="slabel r" style="right:5.6px;top:16.7px">params</div><div class="wt wl" style="left:9.4px;top:46.2px">sampler</div><div class="wt wv" style="right:8.5px;top:46.2px">ddim</div><div class="wt wl" style="left:9.4px;top:53.4px">steps</div><div class="wt wv" style="right:8.5px;top:53.4px">25</div><div class="wt wl" style="left:9.4px;top:60.6px">guidance</div><div class="wt wv" style="right:8.5px;top:60.6px">3.5</div><div class="wt wl" style="left:9.4px;top:67.8px">max_shift</div><div class="wt wv" style="right:8.5px;top:67.8px"></div><div class="wt wl" style="left:9.4px;top:75px">base_shift</div><div class="wt wv" style="right:8.5px;top:75px"></div><div class="wt wl" style="left:9.4px;top:82.2px">denoise</div><div class="wt wv" style="right:8.5px;top:82.2px">1.0</div>
<div class="img" style="left:15.6px;top:90px;width:67.1px;height:67.1px"><svg width="100%" height="100%" viewBox="0 0 100 100" preserveAspectRatio="none"><use href="#girl"/></svg></div>
</div>
<div class="badge tab" style="right:191.3px;top:106.2px;height:8.2px;line-height:6.9px;padding:0 2.9px">#14</div>
<div class="node" style="left:543.2px;top:113px;width:64.8px;height:24.5px">
<svg class="ns" width="64.8" height="24.5" viewBox="0 0 64.8 24.5"><rect x="-0.6" y="-0.6" width="66" height="25.7" rx="3" fill="#000" opacity="0.25"/><rect x="0" y="0" width="64.8" height="24.5" rx="2.4" fill="#353535"/><g><rect x="0.3" y="10.3" width="64.2" height="0.5" fill="#2e2e2e"/><circle cx="6" cy="6.2" r="1.45" fill="#8c8c8c"/><circle cx="4.2" cy="15" r="1.35" fill="#ff9cf9"/><circle cx="4.2" cy="21" r="1.35" fill="#ff6e6e"/><circle cx="61.5" cy="15" r="1.35" fill="#64b5f6"/></g></svg>
<div class="title" style="left:10.4px;top:1.7px">VAE Decode</div><div class="slabel" style="left:7.2px;top:12.5px">samples</div><div class="slabel" style="left:7.2px;top:18.5px">vae</div><div class="slabel r" style="right:6.1px;top:12.5px">IMAGE</div>

</div>
<div class="badge tab" style="right:158.6px;top:135.6px;height:8.2px;line-height:6.9px;padding:0 2.9px">#15</div>
<div class="node" style="left:544px;top:142.4px;width:96.7px;height:28.1px">
<svg class="ns" width="96.7" height="28.1" viewBox="0 0 96.7 28.1"><rect x="-0.6" y="-0.6" width="97.9" height="29.3" rx="3" fill="#000" opacity="0.25"/><rect x="0" y="0" width="96.7" height="28.1" rx="2.4" fill="#353535"/><g><rect x="0.3" y="10.2" width="96.1" height="0.5" fill="#2e2e2e"/><circle cx="6.2" cy="6" r="1.45" fill="#8c8c8c"/><circle cx="93.4" cy="14.9" r="1.35" fill="#ff6e6e"/><rect x="6" y="17.75" width="85.5" height="6.3" rx="3.15" fill="#222" stroke="#4c4c4c" stroke-width="0.7"/><path d="M9.9 19.5 L7.6 20.9 L9.9 22.3Z" fill="#f0f0f0"/><path d="M87.6 19.5 L89.9 20.9 L87.6 22.3Z" fill="#f0f0f0"/></g></svg>
<div class="title" style="left:10.6px;top:1.5px">Load VAE</div><div class="slabel r" style="right:6.1px;top:12.4px">VAE</div><div class="wt wl" style="left:11.6px;top:17.9px">vae_name</div><div class="wt wv" style="right:15.6px;top:17.9px">ae.safetensors</div>

</div>
<div class="badge tab" style="right:29.1px;top:103.5px;height:8.2px;line-height:6.9px;padding:0 2.9px">#16</div>
<div class="node" style="left:673.5px;top:110.3px;width:96.7px;height:91.9px">
<svg class="ns" width="96.7" height="91.9" viewBox="0 0 96.7 91.9"><rect x="-0.6" y="-0.6" width="97.9" height="93.1" rx="3" fill="#000" opacity="0.25"/><rect x="0" y="0" width="96.7" height="91.9" rx="2.4" fill="#353535"/><g><rect x="0.3" y="10.7" width="96.1" height="0.5" fill="#2e2e2e"/><circle cx="6.4" cy="6.3" r="1.45" fill="#8c8c8c"/><circle cx="4.6" cy="15.4" r="1.35" fill="#64b5f6"/><rect x="5.8" y="18.25" width="86.2" height="6.3" rx="3.15" fill="#222" stroke="#4c4c4c" stroke-width="0.7"/></g></svg>
<div class="title" style="left:10.8px;top:1.8px">Save Image</div><div class="slabel" style="left:7.6px;top:12.9px">images</div><div class="wt wl" style="left:10.8px;top:18.4px">filename_prefix</div><div class="wt wv" style="right:8.5px;top:18.4px">ComfyUI</div>
<div class="img" style="left:15.4px;top:25.1px;width:66.4px;height:66.8px"><svg width="100%" height="100%" viewBox="0 0 100 100" preserveAspectRatio="none"><use href="#girl"/></svg></div>
</div>
<svg style="position:absolute;left:0;top:0;z-index:5" width="800" height="526"><circle cx="608.3" cy="115.5" r="0.6" fill="#fff"/><circle cx="609.5" cy="117.4" r="0.6" fill="#fff"/><circle cx="543.7" cy="138.2" r="0.6" fill="#fff"/><circle cx="641.3" cy="143.6" r="0.6" fill="#fff"/><circle cx="544.4" cy="170.2" r="0.6" fill="#fff"/><circle cx="546.2" cy="171.3" r="0.6" fill="#fff"/><circle cx="674" cy="202.7" r="0.6" fill="#fff"/><circle cx="676.2" cy="203.2" r="0.6" fill="#fff"/><circle cx="770.5" cy="111.2" r="0.6" fill="#fff"/><circle cx="144.4" cy="487" r="0.6" fill="#fff"/><circle cx="147.4" cy="488.6" r="0.6" fill="#fff"/><circle cx="629.4" cy="142.7" r="0.6" fill="#f6f"/></svg>
</body></html>
